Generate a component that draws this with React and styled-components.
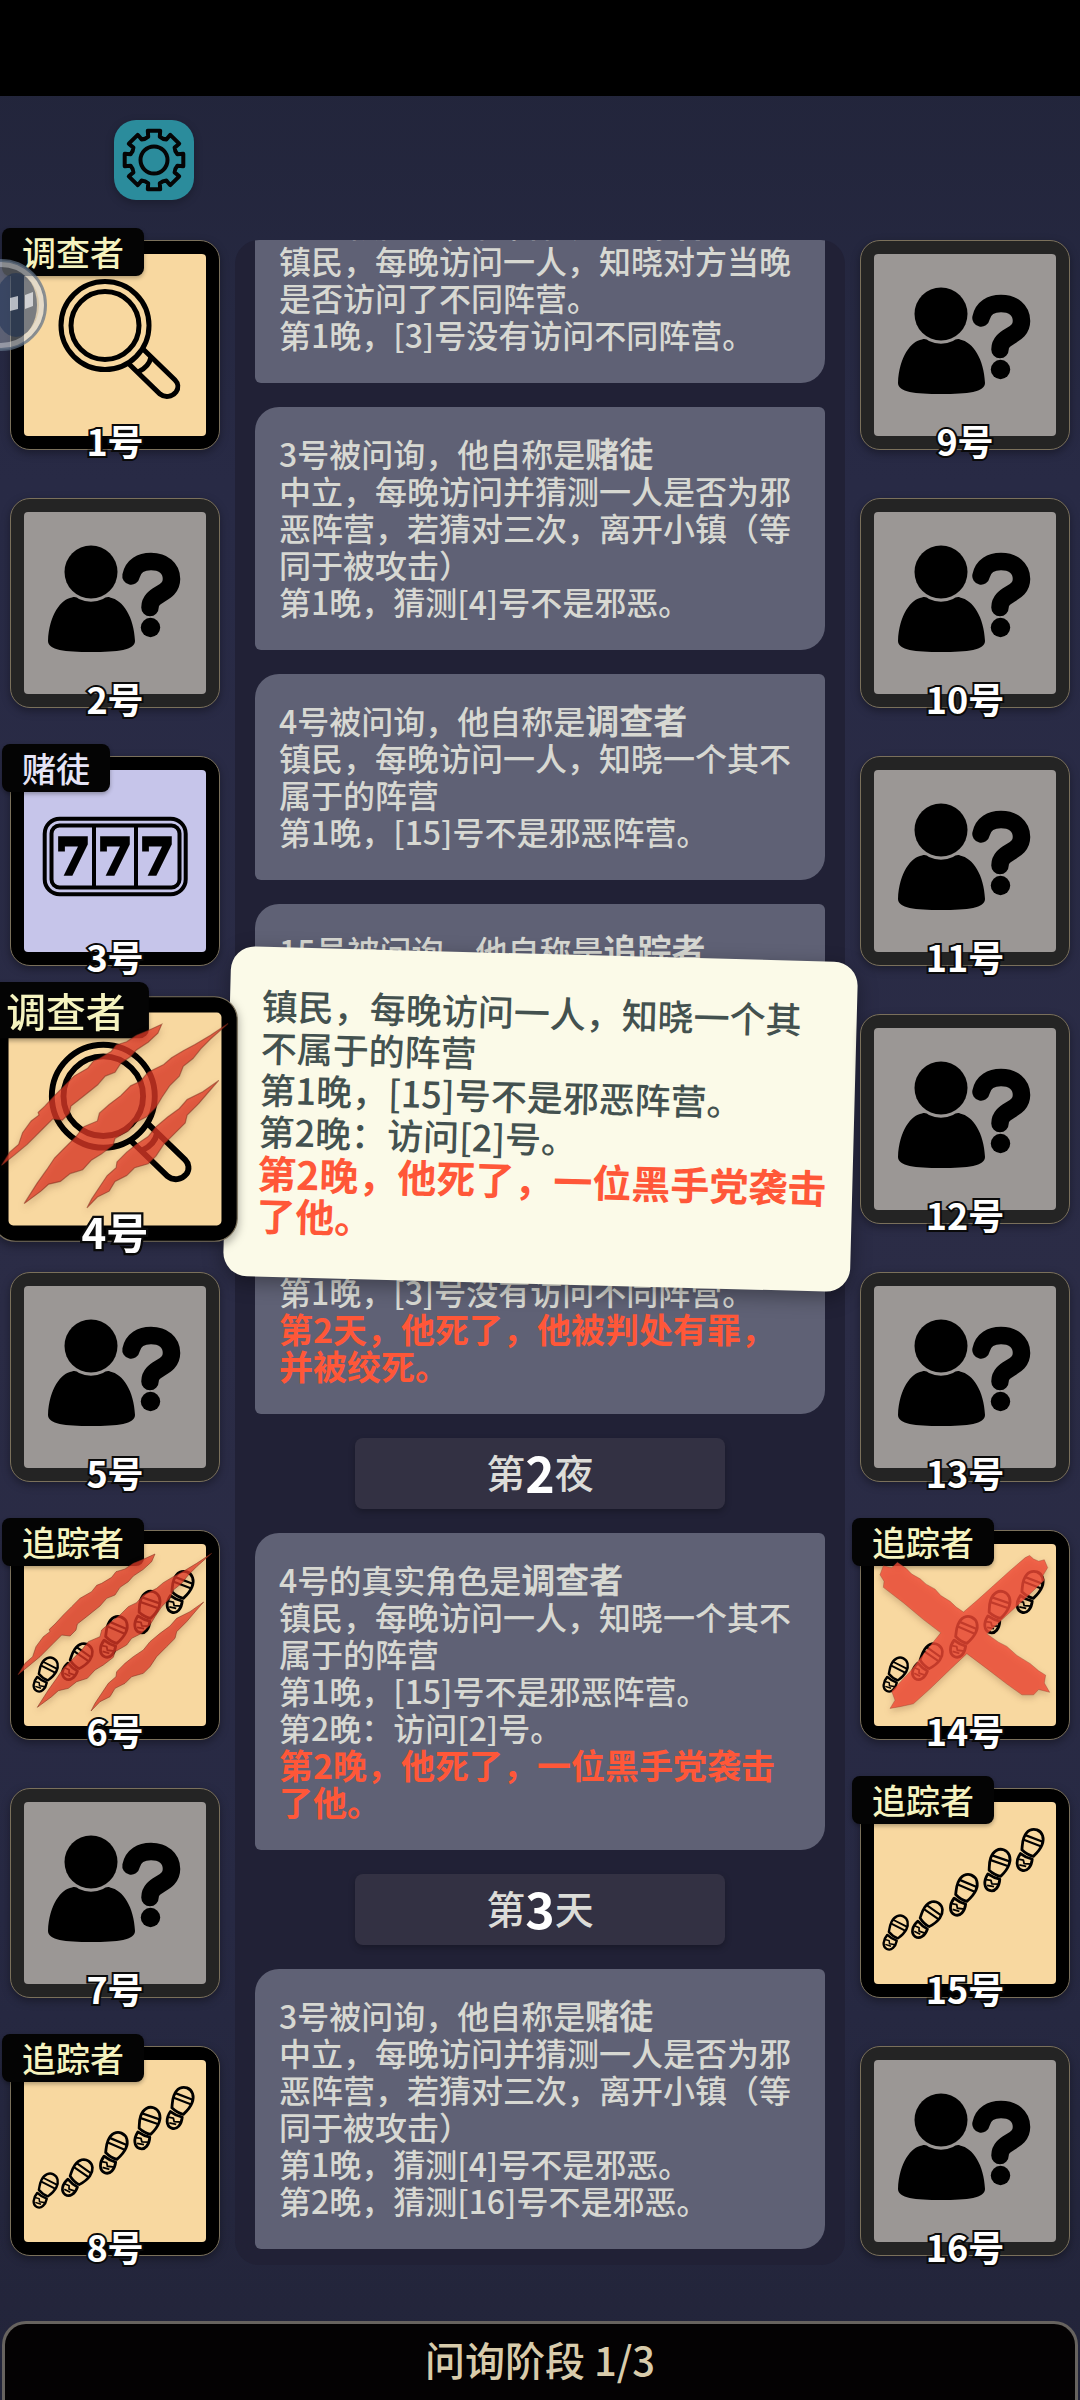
import React from 'react';
import styled, { createGlobalStyle, css } from 'styled-components';

const GlobalStyle = createGlobalStyle`
  * {
    box-sizing: border-box;
  }

  body {
    margin: 0;
    background: #000;
    font-family: "Noto Sans CJK SC", "Noto Sans", sans-serif;
  }

  button {
    font-family: inherit;
    border: 0;
    padding: 0;
    cursor: pointer;
  }
`

const Page = styled.div`
  height: 100vh;
  display: flex;
  flex-direction: column;
  overflow: hidden;
  background: linear-gradient(#212439, #282a45 20%, #2b2c46 55%, #272943 80%, #222439);
`

const StatusBar = styled.div`
  flex: none;
  height: 96px;
  background: #000;
`

const Header = styled.header`
  flex: none;
  height: 144px;
  padding: 24px 114px;
`

const GearButton = styled.button`
  display: block;
  width: 80px;
  height: 80px;
  border-radius: 22px;
  background: #2b8c9c;
  box-shadow: 0 3px 8px rgba(0, 0, 0, 0.25);

  svg {
    display: block;
    margin: 0 auto;
  }
`

const Board = styled.main`
  flex: 1;
  min-height: 0;
  display: grid;
  grid-template-columns: 210px 1fr 210px;
  gap: 15px;
  padding: 0 10px;
  margin-bottom: 56px;
`

const SeatColumn = styled.div`
  position: relative;
  z-index: 2;
  display: flex;
  flex-direction: column;
  gap: 48px;
`

const Seat = styled.button`
  position: relative;
  display: block;
  flex: none;
  width: 100%;
  aspect-ratio: 1;
  padding: 13px;
  border: 1px solid #7a705b;
  border-radius: 20px;
  background: ${props => props.$known ? '#000' : '#242424'};
  box-shadow: 0 3px 8px rgba(0, 0, 0, 0.35);
  ${props => props.$active && css`
    z-index: 1;
    transform: scale(1.17);
  `}
`

const faces = {
  town: '#f8d8a0',
  neutral: '#c6c5ea',
  unknown: '#9b9795',
}

const Face = styled.div`
  height: 100%;
  border-radius: 4px;
  background: ${props => faces[props.$side]};

  svg {
    display: block;
    width: 100%;
    height: 100%;
  }
`

const RoleTag = styled.span`
  position: absolute;
  top: -13px;
  left: -9px;
  padding: 0 20px;
  border-radius: 8px;
  background: #040404;
  box-shadow: 0 2px 4px rgba(0, 0, 0, 0.3);
  color: ${props => props.$side === 'town' ? '#f5f3bf' : '#e6e4f6'};
  font-size: 34px;
  font-weight: 500;
  line-height: 48px;
`

const Mark = styled.svg`
  position: absolute;
  inset: 13px;
  width: calc(100% - 26px);
  height: calc(100% - 26px);
  overflow: visible;
  filter: drop-shadow(0 3px 3px rgba(60, 20, 0, 0.25));
`

const SeatLabel = styled.span`
  position: absolute;
  left: 0;
  right: 0;
  bottom: -11px;
  color: #fff;
  font-size: 36px;
  font-weight: 700;
  line-height: 40px;
  text-align: center;
  -webkit-text-stroke: 4px #0a0a0a;
  paint-order: stroke fill;
`

const Center = styled.section`
  position: relative;
  min-height: 0;
`

const Log = styled.div`
  height: 100%;
  display: flex;
  flex-direction: column;
  justify-content: flex-end;
  gap: 24px;
  padding: 0 20px 16px;
  overflow: hidden;
  border-radius: 24px;
  background: #212136;
`

const Bubble = styled.article`
  flex: none;
  padding: 28px 25px 30px 24px;
  border-radius: 24px 6px 24px 6px;
  background: #5f6175;
  color: #d7d8d2;
  font-size: 32px;
  font-weight: 500;
  line-height: 37px;
`

const Line = styled.p`
  margin: 0;
`

const Role = styled.strong`
  font-size: 34px;
  line-height: 1;
`

const Death = styled.p`
  margin: 0;
  color: #ff5738;
  font-size: ${props => props.$large ? '39px' : '34px'};
  font-weight: 700;
`

const DayChip = styled.h2`
  flex: none;
  align-self: center;
  display: flex;
  align-items: center;
  justify-content: center;
  width: 370px;
  height: 71px;
  margin: 0;
  padding-bottom: 4px;
  border-radius: 8px;
  background: #333143;
  box-shadow: 0 3px 6px rgba(0, 0, 0, 0.25);
  color: #dcdcd8;
  font-size: 39px;
  font-weight: 500;
  line-height: 67px;

  b {
    color: #fff;
    font-size: 50px;
  }
`

const Popup = styled.aside`
  position: absolute;
  z-index: 1;
  top: 714px;
  left: -8px;
  right: -9px;
  padding: 36px 24px 42px 32px;
  border-radius: 24px;
  background: #fbfae8;
  box-shadow: 0 6px 20px rgba(0, 0, 0, 0.35);
  color: #43514f;
  font-size: 36px;
  font-weight: 500;
  line-height: 42px;
  transform: rotate(1.5deg);
`

const Footer = styled.footer`
  flex: none;
  height: 79px;
  margin: 0 2px;
  border: 3px solid #67635f;
  border-bottom: 0;
  border-radius: 24px 24px 0 0;
  background: #040203;
  color: #d8cbab;
  font-size: 40px;
  font-weight: 500;
  line-height: 70px;
  text-align: center;
`

const FloatingBall = styled.button`
  position: fixed;
  z-index: 3;
  top: 259px;
  left: -45px;
  width: 92px;
  height: 92px;
  border-radius: 50%;
  background: none;

  svg {
    display: block;
  }
`

const gearPoints = () => {
  const at = (r, deg) => {
    const a = (deg - 90) * Math.PI / 180
    return `${(32 + r * Math.cos(a)).toFixed(1)} ${(32 + r * Math.sin(a)).toFixed(1)}`
  }
  let d = ''
  for (let i = 0; i < 8; i++) {
    const c = i * 45
    d += `${i ? 'L' : 'M'}${at(24, c - 14)} L${at(30, c - 12)} L${at(30, c + 12)} L${at(24, c + 14)} Q${at(22.5, c + 22.5)} ${at(24, c + 31)} `
  }
  return d + 'Z'
}

const GearIcon = () => (
  <svg width="64" height="64" viewBox="0 0 64 64" fill="none" stroke="#050505" strokeWidth="4" strokeLinejoin="round">
    <path d={gearPoints()} />
    <circle cx="32" cy="32" r="13.5" />
  </svg>
)

const UnknownIcon = () => (
  <svg viewBox="0 0 182 182">
    <circle cx="67" cy="60" r="26.5" />
    <path d="M24 129C25 103 37 87 48 85.500C51 84.500 53 85.500 55 87Q67 92.500 79 87C81 85.500 84 84.500 86 85.500C99 88 110 105 111 129C111 138 94 140 67 140C41 140 24 138 24 129Z" />
    <path d="M107 64C109 54 117 49.500 127 49.500C139 49.500 147.500 56 147.500 67C147.500 83 126 81 126 95.500" fill="none" stroke="#000" strokeWidth="17.500" strokeLinecap="round" />
    <circle cx="126.500" cy="115.500" r="9.700" />
  </svg>
)

const MagnifierIcon = () => (
  <svg viewBox="0 0 182 182" fill="none" stroke="#000" strokeWidth="5">
    <circle cx="81" cy="71.500" r="44" />
    <circle cx="81" cy="71.500" r="34" />
    <path d="M119 95L151 126C154 129 155 134 152 138C148 143 141 144 136 140L105 110" />
    <path d="M127 103Q125 113 114 118" />
  </svg>
)

const SlotIcon = () => (
  <svg viewBox="0 0 182 182">
    <g fill="none" stroke="#000" strokeWidth="4">
      <rect x="20.700" y="48.700" width="141" height="75.500" rx="15" />
      <rect x="27.500" y="55.500" width="128" height="62" rx="8" />
      <path d="M70 55V118M112 55V118" />
    </g>
    <g fontFamily="DejaVu Serif" fontWeight="700" fontSize="49" textAnchor="middle" stroke="#000" strokeWidth="3.500">
      <text x="49" y="104">7</text>
      <text x="91" y="104">7</text>
      <text x="133" y="104">7</text>
    </g>
  </svg>
)

const prints = [
  [24, 125, 27, 0.85],
  [57, 112, 35, 0.95],
  [92, 86, 23, 1],
  [125, 61, 19, 1],
  [158, 41, 21, 1],
]

const FootprintsIcon = () => (
  <svg viewBox="0 0 182 182" fill="none" stroke="#000" strokeWidth="2.800" strokeLinejoin="round">
    {prints.map(([x, y, angle, size]) => (
      <g key={x} transform={`translate(${x} ${y}) rotate(${angle}) scale(${size})`}>
        <path d="M-9.500 -2C-9.500 -10 -5 -14 0 -14C6 -14 10 -9 10 -2C10 4 8 8 6 12Q0 13 -7 10C-8 6 -9.500 3 -9.500 -2Z" />
        <path d="M-9 -5H9.500M-9.500 0H10" strokeWidth="2.200" />
        <path d="M-7 14Q0 16 6 15C8 22 6 29 0 29C-6 29 -9 22 -7 14Z" />
        <path d="M-7 20L-2 19L0 22L7 20M-4 25L3 24" strokeWidth="1.800" />
      </g>
    ))}
  </svg>
)

const ClawMark = () => (
  <Mark viewBox="72 132 546 546">
    <g fill="#e03a28" fillOpacity="0.760" stroke="#7a2a1a" strokeOpacity="0.500" strokeWidth="3">
      <path d="M465 162L430 178L400 190L375 207L348 215L335 232L305 250L290 256L275 275L240 295L215 320L190 345L165 372L148 388L150 395L130 410L108 440L98 470L75 490L54 524L90 495L120 470L140 450L160 430L185 405L210 408L228 390L232 372L260 350L285 330L300 318L320 295L345 285L360 262L385 245L400 228L430 208L455 185Z" />
      <path d="M635 160L590 190L550 214L520 230L490 248L470 265L430 285L410 308L385 320L360 345L330 368L305 390L300 410L265 425L245 450L215 480L190 505L170 535L145 570L112 622L155 590L175 572L205 565L230 545L262 535L285 510L310 495L340 472L345 455L380 435L395 415L425 400L450 375L465 350L485 320L510 295L520 270L545 250L565 225L590 200Z" />
      <path d="M611 306L570 335L530 355L510 378L480 400L450 425L430 450L400 470L375 490L350 515L348 530L325 550L305 580L285 610L273 633L300 605L330 590L345 565L375 550L395 530L430 520L450 500L470 470L500 440L525 415L530 395L560 365L590 330Z" />
    </g>
  </Mark>
)

const CrossMark = () => (
  <Mark viewBox="162 124 545 508" preserveAspectRatio="none">
    <path
      d="M180 210L190 185L215 190L232 175L258 192L275 208L300 221L318 236L345 250L362 268L390 284L408 300L430 314L470 282L520 240L570 198L615 162L628 156L640 166L655 172L672 168L682 190L668 212L672 225L610 280L556 326L500 375L535 398L560 410L590 435L630 458L655 478L676 490L672 512L688 538L655 530L640 545L605 545L560 515L500 472L440 430L390 474L330 528L280 570L240 578L210 583L225 560L215 535L270 480L320 420L362 372L310 335L250 288L190 245L192 228Z"
      fill="#f04834"
      fillOpacity="0.800"
      stroke="#8a3a28"
      strokeOpacity="0.500"
      strokeWidth="2"
    />
  </Mark>
)

const roles = {
  investigator: { name: '调查者', side: 'town', Icon: MagnifierIcon },
  tracker: { name: '追踪者', side: 'town', Icon: FootprintsIcon },
  gambler: { name: '赌徒', side: 'neutral', Icon: SlotIcon },
}

const marks = {
  killed: ClawMark,
  hanged: CrossMark,
}

const leftSeats = [
  { id: 1, role: 'investigator' },
  { id: 2 },
  { id: 3, role: 'gambler' },
  { id: 4, role: 'investigator', mark: 'killed', active: true },
  { id: 5 },
  { id: 6, role: 'tracker', mark: 'killed' },
  { id: 7 },
  { id: 8, role: 'tracker' },
]

const rightSeats = [
  { id: 9 },
  { id: 10 },
  { id: 11 },
  { id: 12 },
  { id: 13 },
  { id: 14, role: 'tracker', mark: 'hanged' },
  { id: 15, role: 'tracker' },
  { id: 16 },
]

const trackerText = '镇民，每晚访问一人，知晓对方当晚是否访问了不同阵营。'
const investigatorText = '镇民，每晚访问一人，知晓一个其不属于的阵营'
const gamblerText = '中立，每晚访问并猜测一人是否为邪恶阵营，若猜对三次，离开小镇（等同于被攻击）'

const log = [
  { title: '14号被问询，他自称是', role: '追踪者', lines: [trackerText, '第1晚，[3]号没有访问不同阵营。'] },
  { title: '3号被问询，他自称是', role: '赌徒', lines: [gamblerText, '第1晚，猜测[4]号不是邪恶。'] },
  { title: '4号被问询，他自称是', role: '调查者', lines: [investigatorText, '第1晚，[15]号不是邪恶阵营。'] },
  { title: '15号被问询，他自称是', role: '追踪者', lines: [trackerText, '第1晚，[8]号没有访问不同阵营。'] },
  {
    title: '14号的真实角色是',
    role: '追踪者',
    lines: [trackerText, '第1晚，[3]号没有访问不同阵营。'],
    death: '第2天，他死了，他被判处有罪，并被绞死。',
  },
  { day: 2, unit: '夜' },
  {
    title: '4号的真实角色是',
    role: '调查者',
    lines: [investigatorText, '第1晚，[15]号不是邪恶阵营。', '第2晚：访问[2]号。'],
    death: '第2晚，他死了，一位黑手党袭击了他。',
  },
  { day: 3, unit: '天' },
  { title: '3号被问询，他自称是', role: '赌徒', lines: [gamblerText, '第1晚，猜测[4]号不是邪恶。', '第2晚，猜测[16]号不是邪恶。'] },
]

const SeatCard = ({ seat }) => {
  const role = roles[seat.role]
  const Icon = role ? role.Icon : UnknownIcon
  const MarkIcon = marks[seat.mark]
  return (
    <Seat type="button" $known={!!role} $active={seat.active}>
      <Face $side={role ? role.side : 'unknown'}>
        <Icon />
      </Face>
      {role && <RoleTag $side={role.side}>{role.name}</RoleTag>}
      {MarkIcon && <MarkIcon />}
      <SeatLabel>{`${seat.id}号`}</SeatLabel>
    </Seat>
  )
}

const LogEntry = ({ entry }) => {
  if (entry.day) {
    return <DayChip>第<b>{entry.day}</b>{entry.unit}</DayChip>
  }
  return (
    <Bubble>
      <Line>{entry.title}<Role>{entry.role}</Role></Line>
      {entry.lines.map(line => <Line key={line}>{line}</Line>)}
      {entry.death && <Death>{entry.death}</Death>}
    </Bubble>
  )
}

const App = () => {
  return (
    <Page>
      <GlobalStyle />
      <StatusBar />
      <Header>
        <GearButton type="button" aria-label="设置">
          <GearIcon />
        </GearButton>
      </Header>
      <Board>
        <SeatColumn>
          {leftSeats.map(seat => <SeatCard key={seat.id} seat={seat} />)}
        </SeatColumn>
        <Center>
          <Log>
            {log.map((entry, i) => <LogEntry key={i} entry={entry} />)}
          </Log>
          <Popup>
            <Line>{investigatorText}</Line>
            <Line>第1晚，[15]号不是邪恶阵营。</Line>
            <Line>第2晚：访问[2]号。</Line>
            <Death $large>第2晚，他死了，一位黑手党袭击了他。</Death>
          </Popup>
        </Center>
        <SeatColumn>
          {rightSeats.map(seat => <SeatCard key={seat.id} seat={seat} />)}
        </SeatColumn>
      </Board>
      <Footer>问询阶段 1/3</Footer>
      <FloatingBall type="button" aria-label="悬浮球">
        <svg width="92" height="92" viewBox="0 0 92 92">
          <circle cx="46" cy="46" r="44.500" fill="#a9b0bd" fillOpacity="0.420" stroke="#5f7186" strokeOpacity="0.700" strokeWidth="3" />
          <circle cx="46" cy="46" r="40.500" fill="none" stroke="#fff" strokeOpacity="0.350" strokeWidth="5" />
          <ellipse cx="61" cy="46" rx="21" ry="32" fill="#142c52" fillOpacity="0.480" />
          <path d="M55 39L63 37V50L55 52Z M70 36L78 33V47L70 50Z" fill="#fff" fillOpacity="0.650" />
        </svg>
      </FloatingBall>
    </Page>
  )
}

export default App;
